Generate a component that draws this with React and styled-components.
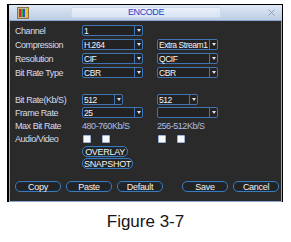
import React from "react";
import styled, { createGlobalStyle } from "styled-components";

const GlobalStyle = createGlobalStyle`
  html, body { margin: 0; padding: 0; background: #ffffff; }
  body { font-family: "Liberation Sans", Arial, sans-serif; }
  * { box-sizing: border-box; }
`;

const Page = styled.div`
  width: 291px;
  height: 242px;
  padding: 4px 0 0 7px;
  overflow: hidden;
`;

const Dialog = styled.div`
  width: 276px;
  border-top: 1px solid #000;
  border-left: 2px solid #000;
  border-right: 1px solid #000;
  display: flex;
  flex-direction: column;
`;

const TitleBar = styled.div`
  height: 15px;
  display: flex;
  align-items: center;
  background: linear-gradient(#dfe8f5, #bccde4);
  padding: 0 6px 0 8px;
`;

const TitleBox = styled.div`
  width: 150px;
  height: 11px;
  margin-left: 42px;
  display: flex;
  align-items: center;
  justify-content: center;
  background: linear-gradient(#eaf0f9, #d8e4f3);
  border: 1px solid #cfdbed;
  border-radius: 2px;
  color: #2d3cc6;
  font-size: 9px;
  letter-spacing: -0.4px;
  line-height: 1;
`;

const CloseButton = styled.div`
  margin-left: auto;
  width: 9px;
  height: 9px;
  display: flex;
  align-items: center;
  justify-content: center;
`;

const Body = styled.div`
  height: 182px;
  border: 1px solid #8ea6d6;
  background: #2a2a2a;
  padding: 4px 0 0 5px;
  display: flex;
  flex-direction: column;
`;

const Form = styled.div`
  display: grid;
  grid-template-columns: 53px 61px 61px;
  column-gap: 14px;
  grid-template-rows: 14px 14px 14px 27px 13px 13px 13px 13px 12px 11px;
  align-items: start;
`;

const Label = styled.div`
  height: 11px;
  display: flex;
  align-items: center;
  color: #d6dcea;
  font-size: 9px;
  letter-spacing: -0.45px;
  white-space: nowrap;
`;

const Value = styled(Label)`
  color: #aebde0;
`;

const Blank = styled.div``;

const SelectBox = styled.div`
  width: ${(p) => p.$w}px;
  height: 11px;
  display: flex;
  border: 1px solid #3f74b2;
  border-radius: 2px;
  background: #222;
`;

const SelectText = styled.div`
  flex: 1;
  min-width: 0;
  display: flex;
  align-items: center;
  padding-left: 1px;
  color: #f4f6fa;
  font-size: 8.5px;
  letter-spacing: -0.45px;
  white-space: nowrap;
`;

const SelectArrow = styled.div`
  width: 8px;
  flex: none;
  border-left: 1px solid #3f74b2;
  display: flex;
  align-items: center;
  justify-content: center;
  &::after {
    content: "";
    border-left: 2.5px solid transparent;
    border-right: 2.5px solid transparent;
    border-top: 3px solid #e0e4ec;
  }
`;

const Checks = styled.div`
  height: 11px;
  display: flex;
  align-items: center;
  gap: 11px;
  padding-left: 1px;
`;

const Check = styled.div`
  width: 8px;
  height: 8px;
  background: #f6f8fc;
  border: 1px solid #9fb4da;
  border-radius: 1px;
`;

const PillButton = styled.div`
  width: ${(p) => p.$w}px;
  height: ${(p) => p.$h || 11}px;
  margin-left: ${(p) => p.$ml || 0}px;
  display: flex;
  align-items: center;
  justify-content: center;
  border: 1px solid #3a79ba;
  border-radius: 5px;
  background: #232323;
  box-shadow: inset 0 0 0 1px #1a2a3c;
  color: #f0f2f6;
  font-size: 9px;
  letter-spacing: -0.3px;
  white-space: nowrap;
`;

const SpanCell = styled.div`
  grid-column: 2 / 4;
`;

const ButtonBar = styled.div`
  display: flex;
  gap: 5px;
  margin-top: 12px;
`;

const Caption = styled.div`
  margin-top: 10px;
  margin-left: -7px;
  width: 291px;
  text-align: center;
  color: #161616;
  font-size: 17px;
  line-height: 19px;
`;

function Select({ w, value }) {
  return (
    <SelectBox $w={w}>
      <SelectText>{value}</SelectText>
      <SelectArrow />
    </SelectBox>
  );
}

function AppIcon() {
  return (
    <svg width="12" height="12" viewBox="0 0 12 12">
      <rect x="0.5" y="0.5" width="11" height="11" fill="#c9b58a" stroke="#8a7446" />
      <rect x="2" y="2" width="2" height="8" fill="#d8262a" />
      <rect x="4" y="2" width="2" height="8" fill="#2fb344" />
      <rect x="6" y="2" width="2" height="8" fill="#2f4fd6" />
      <rect x="8" y="2" width="2" height="8" fill="#e8c62a" />
    </svg>
  );
}

export default function App() {
  return (
    <>
      <GlobalStyle />
      <Page>
        <Dialog>
          <TitleBar>
            <AppIcon />
            <TitleBox>ENCODE</TitleBox>
            <CloseButton>
              <svg width="7" height="7" viewBox="0 0 7 7">
                <path d="M0.5 0.5 L6.5 6.5 M6.5 0.5 L0.5 6.5" stroke="#8a97ad" strokeWidth="0.9" />
              </svg>
            </CloseButton>
          </TitleBar>
          <Body>
            <Form>
              <Label>Channel</Label>
              <Select w={61} value="1" />
              <Blank />

              <Label>Compression</Label>
              <Select w={61} value="H.264" />
              <Select w={61} value="Extra Stream1" />

              <Label>Resolution</Label>
              <Select w={61} value="CIF" />
              <Select w={61} value="QCIF" />

              <Label>Bit Rate Type</Label>
              <Select w={61} value="CBR" />
              <Select w={61} value="CBR" />

              <Label>Bit Rate(Kb/S)</Label>
              <Select w={41} value="512" />
              <Select w={41} value="512" />

              <Label>Frame Rate</Label>
              <Select w={61} value="25" />
              <Select w={61} value="" />

              <Label>Max Bit Rate</Label>
              <Value>480-760Kb/S</Value>
              <Value>256-512Kb/S</Value>

              <Label>Audio/Video</Label>
              <Checks>
                <Check />
                <Check />
              </Checks>
              <Checks>
                <Check />
                <Check />
              </Checks>

              <Blank />
              <SpanCell>
                <PillButton $w={46} $h={11}>OVERLAY</PillButton>
              </SpanCell>

              <Blank />
              <SpanCell>
                <PillButton $w={51} $h={11}>SNAPSHOT</PillButton>
              </SpanCell>
            </Form>
            <ButtonBar>
              <PillButton $w={46}>Copy</PillButton>
              <PillButton $w={46}>Paste</PillButton>
              <PillButton $w={46}>Default</PillButton>
              <PillButton $w={46} $ml={14}>Save</PillButton>
              <PillButton $w={46}>Cancel</PillButton>
            </ButtonBar>
          </Body>
        </Dialog>
        <Caption>Figure 3-7</Caption>
      </Page>
    </>
  );
}
